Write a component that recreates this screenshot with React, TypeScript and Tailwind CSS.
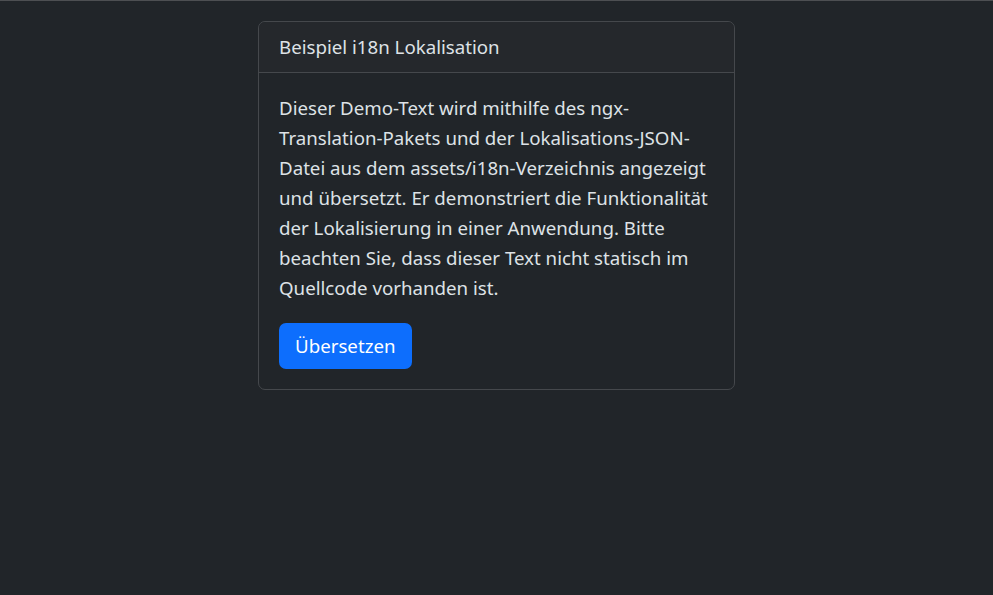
export default function App() {
  const lines = [
    'Dieser Demo-Text wird mithilfe des ngx-',
    'Translation-Pakets und der Lokalisations-JSON-',
    'Datei aus dem assets/i18n-Verzeichnis angezeigt',
    'und übersetzt. Er demonstriert die Funktionalität',
    'der Lokalisierung in einer Anwendung. Bitte',
    'beachten Sie, dass dieser Text nicht statisch im',
    'Quellcode vorhanden ist.',
  ];

  return (
    <div
      className="h-[595px] w-[993px] overflow-hidden border-t border-[#4d4f52] bg-[#212529] text-[#dee2e6]"
      style={{ fontFamily: '"Noto Sans", "Open Sans", sans-serif' }}
    >
      <div className="flex justify-center pt-5">
        <div className="w-[477px] rounded-[7px] border border-[#45484c]">
          {/* Header */}
          <div className="flex h-[51px] items-center rounded-t-[7px] border-b border-[#45484c] bg-[#25282c] px-5 text-[18.7px]">
            Beispiel i18n Lokalisation
          </div>

          {/* Body */}
          <div className="p-5">
            <p className="mb-5 text-[18.7px] leading-[30px]">
              {lines.map((line, i) => (
                <span key={i} className="block whitespace-nowrap">
                  {line}
                </span>
              ))}
            </p>
            <button className="h-[46px] rounded-[7px] bg-[#0d6efd] px-[16px] text-[18.7px] text-white">
              Übersetzen
            </button>
          </div>
        </div>
      </div>
    </div>
  );
}
